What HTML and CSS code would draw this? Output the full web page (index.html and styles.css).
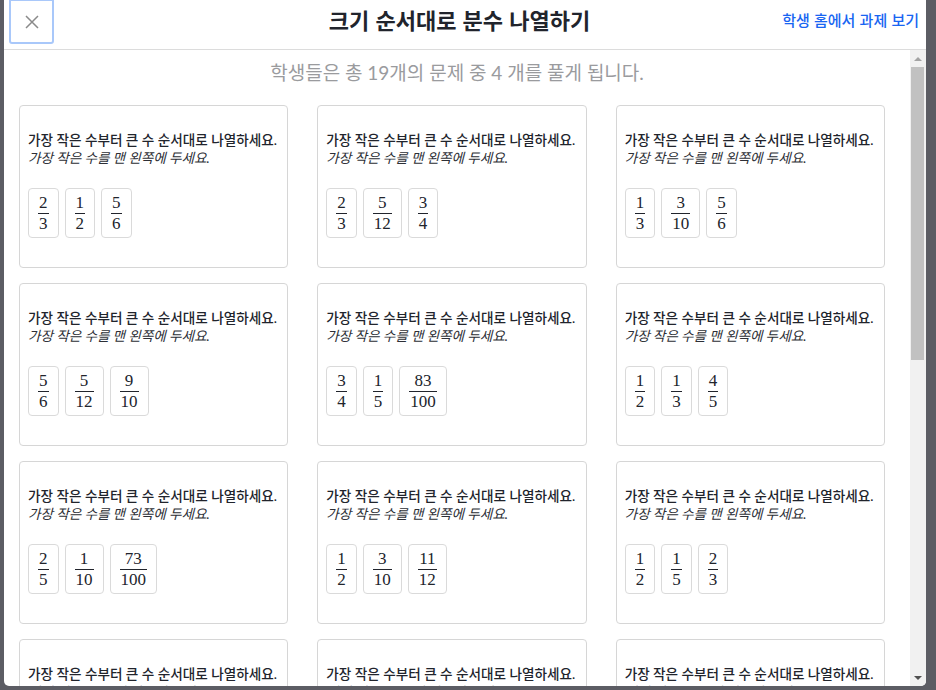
FILE: index.html
```html
<!DOCTYPE html>
<html lang="ko">
<head>
<meta charset="utf-8">
<title>크기 순서대로 분수 나열하기</title>
<link rel="stylesheet" href="styles.css">
</head>
<body>
<div class="modal">
  <header class="modal-header">
    <div class="header-left">
      <button class="close-btn" aria-label="닫기">
        <svg width="14" height="14" viewBox="0 0 14 14"><path d="M1 1 L13 13 M13 1 L1 13" stroke="#8a8a8a" stroke-width="1.5" fill="none"/></svg>
      </button>
    </div>
    <h1 class="title">크기 순서대로 분수 나열하기</h1>
    <div class="header-right"><a class="home-link" href="#">학생 홈에서 과제 보기</a></div>
  </header>
  <div class="modal-body">
    <div class="content">
      <p class="subtitle">학생들은 총 19개의 문제 중 4 개를 풀게 됩니다.</p>
      <div class="grid">
        <div class="card">
          <p class="q">가장 작은 수부터 큰 수 순서대로 나열하세요.</p>
          <p class="hint">가장 작은 수를 맨 왼쪽에 두세요.</p>
          <div class="tiles">
            <span class="tile"><span class="frac"><span class="num">2</span><span class="den">3</span></span></span>
            <span class="tile"><span class="frac"><span class="num">1</span><span class="den">2</span></span></span>
            <span class="tile"><span class="frac"><span class="num">5</span><span class="den">6</span></span></span>
          </div>
        </div>
        <div class="card">
          <p class="q">가장 작은 수부터 큰 수 순서대로 나열하세요.</p>
          <p class="hint">가장 작은 수를 맨 왼쪽에 두세요.</p>
          <div class="tiles">
            <span class="tile"><span class="frac"><span class="num">2</span><span class="den">3</span></span></span>
            <span class="tile"><span class="frac"><span class="num">5</span><span class="den">12</span></span></span>
            <span class="tile"><span class="frac"><span class="num">3</span><span class="den">4</span></span></span>
          </div>
        </div>
        <div class="card">
          <p class="q">가장 작은 수부터 큰 수 순서대로 나열하세요.</p>
          <p class="hint">가장 작은 수를 맨 왼쪽에 두세요.</p>
          <div class="tiles">
            <span class="tile"><span class="frac"><span class="num">1</span><span class="den">3</span></span></span>
            <span class="tile"><span class="frac"><span class="num">3</span><span class="den">10</span></span></span>
            <span class="tile"><span class="frac"><span class="num">5</span><span class="den">6</span></span></span>
          </div>
        </div>
        <div class="card">
          <p class="q">가장 작은 수부터 큰 수 순서대로 나열하세요.</p>
          <p class="hint">가장 작은 수를 맨 왼쪽에 두세요.</p>
          <div class="tiles">
            <span class="tile"><span class="frac"><span class="num">5</span><span class="den">6</span></span></span>
            <span class="tile"><span class="frac"><span class="num">5</span><span class="den">12</span></span></span>
            <span class="tile"><span class="frac"><span class="num">9</span><span class="den">10</span></span></span>
          </div>
        </div>
        <div class="card">
          <p class="q">가장 작은 수부터 큰 수 순서대로 나열하세요.</p>
          <p class="hint">가장 작은 수를 맨 왼쪽에 두세요.</p>
          <div class="tiles">
            <span class="tile"><span class="frac"><span class="num">3</span><span class="den">4</span></span></span>
            <span class="tile"><span class="frac"><span class="num">1</span><span class="den">5</span></span></span>
            <span class="tile"><span class="frac"><span class="num">83</span><span class="den">100</span></span></span>
          </div>
        </div>
        <div class="card">
          <p class="q">가장 작은 수부터 큰 수 순서대로 나열하세요.</p>
          <p class="hint">가장 작은 수를 맨 왼쪽에 두세요.</p>
          <div class="tiles">
            <span class="tile"><span class="frac"><span class="num">1</span><span class="den">2</span></span></span>
            <span class="tile"><span class="frac"><span class="num">1</span><span class="den">3</span></span></span>
            <span class="tile"><span class="frac"><span class="num">4</span><span class="den">5</span></span></span>
          </div>
        </div>
        <div class="card">
          <p class="q">가장 작은 수부터 큰 수 순서대로 나열하세요.</p>
          <p class="hint">가장 작은 수를 맨 왼쪽에 두세요.</p>
          <div class="tiles">
            <span class="tile"><span class="frac"><span class="num">2</span><span class="den">5</span></span></span>
            <span class="tile"><span class="frac"><span class="num">1</span><span class="den">10</span></span></span>
            <span class="tile"><span class="frac"><span class="num">73</span><span class="den">100</span></span></span>
          </div>
        </div>
        <div class="card">
          <p class="q">가장 작은 수부터 큰 수 순서대로 나열하세요.</p>
          <p class="hint">가장 작은 수를 맨 왼쪽에 두세요.</p>
          <div class="tiles">
            <span class="tile"><span class="frac"><span class="num">1</span><span class="den">2</span></span></span>
            <span class="tile"><span class="frac"><span class="num">3</span><span class="den">10</span></span></span>
            <span class="tile"><span class="frac"><span class="num">11</span><span class="den">12</span></span></span>
          </div>
        </div>
        <div class="card">
          <p class="q">가장 작은 수부터 큰 수 순서대로 나열하세요.</p>
          <p class="hint">가장 작은 수를 맨 왼쪽에 두세요.</p>
          <div class="tiles">
            <span class="tile"><span class="frac"><span class="num">1</span><span class="den">2</span></span></span>
            <span class="tile"><span class="frac"><span class="num">1</span><span class="den">5</span></span></span>
            <span class="tile"><span class="frac"><span class="num">2</span><span class="den">3</span></span></span>
          </div>
        </div>
        <div class="card">
          <p class="q">가장 작은 수부터 큰 수 순서대로 나열하세요.</p>
          <p class="hint">가장 작은 수를 맨 왼쪽에 두세요.</p>
          <div class="tiles">
            <span class="tile"><span class="frac"><span class="num">1</span><span class="den">4</span></span></span>
            <span class="tile"><span class="frac"><span class="num">2</span><span class="den">3</span></span></span>
            <span class="tile"><span class="frac"><span class="num">1</span><span class="den">2</span></span></span>
          </div>
        </div>
        <div class="card">
          <p class="q">가장 작은 수부터 큰 수 순서대로 나열하세요.</p>
          <p class="hint">가장 작은 수를 맨 왼쪽에 두세요.</p>
          <div class="tiles">
            <span class="tile"><span class="frac"><span class="num">3</span><span class="den">5</span></span></span>
            <span class="tile"><span class="frac"><span class="num">1</span><span class="den">6</span></span></span>
            <span class="tile"><span class="frac"><span class="num">7</span><span class="den">10</span></span></span>
          </div>
        </div>
        <div class="card">
          <p class="q">가장 작은 수부터 큰 수 순서대로 나열하세요.</p>
          <p class="hint">가장 작은 수를 맨 왼쪽에 두세요.</p>
          <div class="tiles">
            <span class="tile"><span class="frac"><span class="num">2</span><span class="den">5</span></span></span>
            <span class="tile"><span class="frac"><span class="num">1</span><span class="den">3</span></span></span>
            <span class="tile"><span class="frac"><span class="num">3</span><span class="den">4</span></span></span>
          </div>
        </div>
      </div>
    </div>
    <div class="scrollbar">
      <div class="sb-btn"><span class="arrow-up"></span></div>
      <div class="sb-track"><div class="sb-thumb"></div></div>
      <div class="sb-btn"><span class="arrow-down"></span></div>
    </div>
  </div>
</div>
</body>
</html>
```

FILE: styles.css
```css
* { box-sizing: border-box; }

html, body {
  margin: 0;
  padding: 0;
  height: 100%;
  overflow: hidden;
}

body {
  background: #5c5d64;
  font-family: Lato, "Noto Sans CJK KR", sans-serif;
  color: #21242c;
}

.modal {
  margin-left: 4px;
  width: 922px;
  height: 686px;
  background: #fff;
  border-radius: 0 0 5px 5px;
  display: flex;
  flex-direction: column;
  overflow: hidden;
}

.modal-header {
  height: 50px;
  flex: none;
  border-bottom: 1px solid #dcdcdc;
  display: grid;
  grid-template-columns: 1fr auto 1fr;
  align-items: start;
  padding: 0 7px 0 5px;
}

.header-left { display: flex; }

.close-btn {
  width: 45px;
  height: 45px;
  margin-top: -1px;
  border: 2px solid #a9c8fa;
  border-radius: 0 0 3px 3px;
  background: #fff;
  display: flex;
  align-items: center;
  justify-content: center;
  padding: 0;
}

.title {
  margin: 0;
  padding-right: 9px;
  font-family: "Noto Sans CJK KR", sans-serif;
  font-size: 22px;
  font-weight: 700;
  line-height: 38px;
  color: #21242c;
}

.header-right {
  display: flex;
  justify-content: flex-end;
}

.home-link {
  font-family: "Noto Sans CJK KR", sans-serif;
  font-size: 15px;
  font-weight: 500;
  line-height: 40px;
  color: #1865f2;
  text-decoration: none;
}

.modal-body {
  flex: 1;
  display: flex;
  min-height: 0;
}

.content {
  flex: 1;
  overflow: hidden;
  padding: 0 15px;
}

.subtitle {
  margin: 11px 0 20px;
  text-align: center;
  font-size: 19px;
  line-height: 24px;
  color: #9a9b9e;
}

.grid {
  display: grid;
  grid-template-columns: repeat(3, 1fr);
  column-gap: 29px;
  row-gap: 15px;
  margin-right: 10px;
}

.card {
  border: 1px solid #d6d6d6;
  border-radius: 4px;
  padding: 25px 8px 29px;
}

.q, .hint {
  margin: 0;
  font-size: 13.6px;
  line-height: 18px;
  white-space: nowrap;
}

.q {
  color: #21242c;
  font-weight: 500;
}

.hint {
  font-style: italic;
  color: #2d2f36;
}

.tiles {
  display: flex;
  gap: 6px;
  margin-top: 21px;
}

.tile {
  height: 50px;
  border: 1px solid #dadada;
  border-radius: 4px;
  padding: 0 9px;
  display: flex;
  align-items: center;
  justify-content: center;
}

.frac {
  display: flex;
  flex-direction: column;
  align-items: stretch;
  font-family: "Liberation Serif", serif;
  font-size: 17px;
  color: #21242c;
  text-align: center;
}

.num {
  line-height: 18px;
  padding: 0 1px 1px;
  border-bottom: 1px solid #21242c;
}

.den {
  line-height: 18px;
  padding: 1px 1px 0;
}

.scrollbar {
  width: 16px;
  flex: none;
  background: #f1f1f1;
  display: flex;
  flex-direction: column;
}

.sb-btn {
  height: 17px;
  flex: none;
  display: flex;
  align-items: center;
  justify-content: center;
}

.arrow-up {
  width: 0;
  height: 0;
  border-left: 4px solid transparent;
  border-right: 4px solid transparent;
  border-bottom: 4px solid #a3a3a3;
}

.arrow-down {
  width: 0;
  height: 0;
  border-left: 4px solid transparent;
  border-right: 4px solid transparent;
  border-top: 4px solid #505050;
}

.sb-track {
  flex: 1;
  padding: 0 2px 0 1px;
}

.sb-thumb {
  height: 293px;
  background: #c1c1c1;
}
```
